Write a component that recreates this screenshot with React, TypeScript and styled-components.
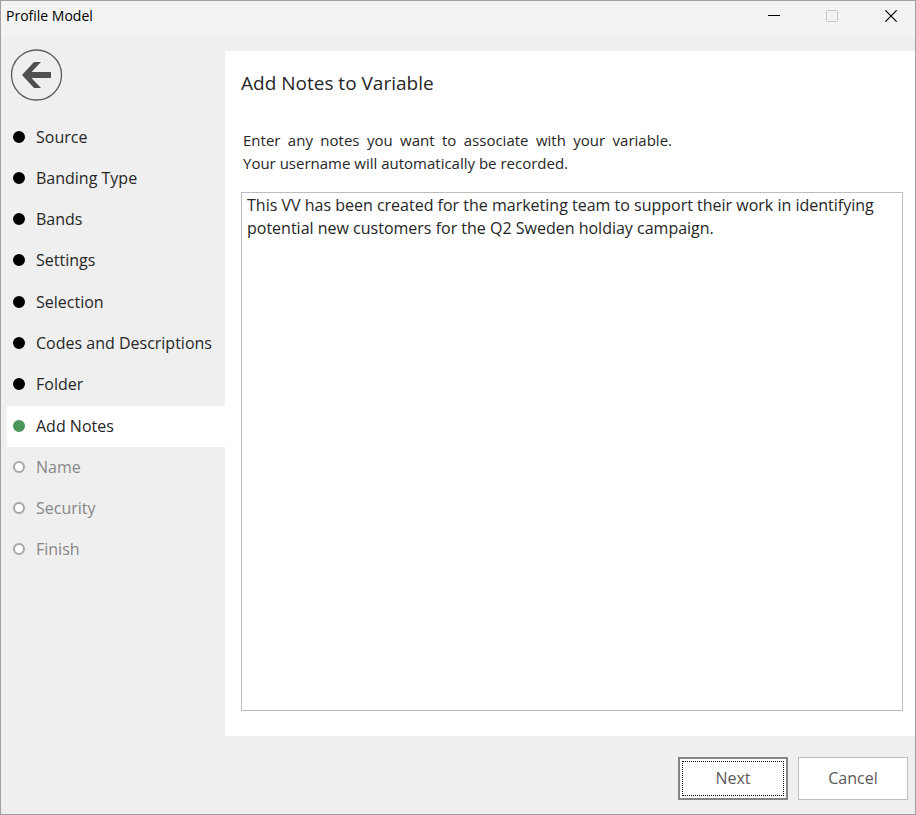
import React, { useState } from "react";
import styled, { createGlobalStyle } from "styled-components";

const GlobalStyle = createGlobalStyle`
  *, *::before, *::after { box-sizing: border-box; }
  body {
    margin: 0;
    font-family: "Open Sans", "Noto Sans", sans-serif;
    font-size: 16px;
    color: #262626;
  }
  button, textarea { font: inherit; color: inherit; }
`;

const Window = styled.div`
  display: flex;
  flex-direction: column;
  min-height: 100vh;
  border: 1px solid #a0a0a0;
  background: #efefef;
`;

const TitleBar = styled.header`
  display: flex;
  justify-content: space-between;
  height: 35px;
  padding-left: 5px;
  background: #f3f3f3;
`;

const WindowTitle = styled.span`
  font-size: 14px;
  line-height: 30px;
  color: #000;
`;

const WindowControls = styled.div`
  display: flex;
  height: 30px;
`;

const WindowButton = styled.button`
  display: grid;
  place-items: center;
  width: 58px;
  padding: 0;
  border: 0;
  background: transparent;
  color: #000;
  &:last-child { width: 48px; margin-left: 6px; }
  &:disabled { color: #c4c4c4; }
`;

const Body = styled.div`
  display: flex;
  flex: 1;
`;

const Sidebar = styled.nav`
  flex: none;
  width: 224px;
  padding: 13px 0 0 6px;
`;

const BackButton = styled.button`
  display: block;
  margin: 0 0 15px 3px;
  padding: 0;
  border: 0;
  background: transparent;
  svg { display: block; }
`;

const Steps = styled.ol`
  display: grid;
  grid-auto-rows: 1fr;
  height: 454px;
  margin: 0;
  padding: 0;
  list-style: none;
`;

type StepState = "done" | "current" | "pending";

const dotFill = { done: "#000", current: "#4a9558", pending: "#fff" };
const dotStroke = { done: "#000", current: "#4a9558", pending: "#a6a6a6" };

const Step = styled.li<{ $state: StepState }>`
  display: flex;
  align-items: center;
  gap: 11px;
  padding: 0 0 2px 6px;
  background: ${(p) => (p.$state === "current" ? "#fff" : "transparent")};
  color: ${(p) => (p.$state === "pending" ? "#868686" : "#262626")};
  &::before {
    content: "";
    width: 12px;
    height: 12px;
    border: 2px solid ${(p) => dotStroke[p.$state]};
    border-radius: 50%;
    background: ${(p) => dotFill[p.$state]};
  }
`;

const Main = styled.main`
  display: flex;
  flex: 1;
  flex-direction: column;
  min-width: 0;
  padding-top: 15px;
`;

const Panel = styled.section`
  display: flex;
  flex: 1;
  flex-direction: column;
  padding: 16px 12px 25px 16px;
  background: #fff;
`;

const Heading = styled.h1`
  margin: 0;
  font-size: 19px;
  font-weight: 400;
  line-height: 32px;
`;

const Intro = styled.label`
  max-width: 431px;
  margin: 30px 0 17px;
  padding-left: 2px;
  font-size: 15px;
  line-height: 23px;
  text-align: justify;
`;

const Notes = styled.textarea`
  flex: 1;
  width: 100%;
  padding: 1px 5px;
  border: 1px solid #bdbdbd;
  border-radius: 0;
  outline: 0;
  background: #fff;
  line-height: 23px;
  resize: none;
`;

const Footer = styled.footer`
  display: flex;
  justify-content: flex-end;
  gap: 10px;
  padding: 21px 7px 14px;
`;

const ActionButton = styled.button<{ $primary?: boolean }>`
  width: 110px;
  height: 43px;
  padding: 0 0 2px;
  border: ${(p) => (p.$primary ? "2px solid #858585" : "1px solid #bdbdbd")};
  outline: ${(p) => (p.$primary ? "1px dotted #000" : "none")};
  outline-offset: -5px;
  background: #fff;
  color: #5a5a5a;
`;

const steps: { label: string; state: StepState }[] = [
  { label: "Source", state: "done" },
  { label: "Banding Type", state: "done" },
  { label: "Bands", state: "done" },
  { label: "Settings", state: "done" },
  { label: "Selection", state: "done" },
  { label: "Codes and Descriptions", state: "done" },
  { label: "Folder", state: "done" },
  { label: "Add Notes", state: "current" },
  { label: "Name", state: "pending" },
  { label: "Security", state: "pending" },
  { label: "Finish", state: "pending" },
];

export default function App() {
  const [notes, setNotes] = useState(
    "This VV has been created for the marketing team to support their work in identifying potential new customers for the Q2 Sweden holdiay campaign."
  );

  return (
    <Window>
      <GlobalStyle />
      <TitleBar>
        <WindowTitle>Profile Model</WindowTitle>
        <WindowControls>
          <WindowButton type="button" aria-label="Minimize">
            <svg width="12" height="12" stroke="currentColor" fill="none">
              <path d="M0 5.5H12" />
            </svg>
          </WindowButton>
          <WindowButton type="button" aria-label="Maximize" disabled>
            <svg width="12" height="12" stroke="currentColor" fill="none">
              <rect x="0.5" y="0.5" width="11" height="11" rx="1" />
            </svg>
          </WindowButton>
          <WindowButton type="button" aria-label="Close">
            <svg width="12" height="12" stroke="currentColor" fill="none">
              <path d="M0.3 0.3L11.7 11.7M11.7 0.3L0.3 11.7" strokeWidth="1.2" />
            </svg>
          </WindowButton>
        </WindowControls>
      </TitleBar>
      <Body>
        <Sidebar aria-label="Wizard steps">
          <BackButton type="button" aria-label="Back">
            <svg width="53" height="53" viewBox="0 0 53 53">
              <circle cx="26.5" cy="26" r="25" fill="none" stroke="#5c5c5c" strokeWidth="1.3" />
              <path
                d="M12 26L24 13H31L21.5 23H41V29H21.5L31 39H24Z"
                fill="#505050"
              />
            </svg>
          </BackButton>
          <Steps>
            {steps.map((s) => (
              <Step
                key={s.label}
                $state={s.state}
                aria-current={s.state === "current" ? "step" : undefined}
              >
                {s.label}
              </Step>
            ))}
          </Steps>
        </Sidebar>
        <Main>
          <Panel>
            <Heading>Add Notes to Variable</Heading>
            <Intro htmlFor="notes">
              Enter any notes you want to associate with your variable. Your
              username will automatically be recorded.
            </Intro>
            <Notes
              id="notes"
              spellCheck={false}
              value={notes}
              onChange={(e) => setNotes(e.target.value)}
            />
          </Panel>
        </Main>
      </Body>
      <Footer>
        <ActionButton type="button" $primary>
          Next
        </ActionButton>
        <ActionButton type="button">Cancel</ActionButton>
      </Footer>
    </Window>
  );
}
